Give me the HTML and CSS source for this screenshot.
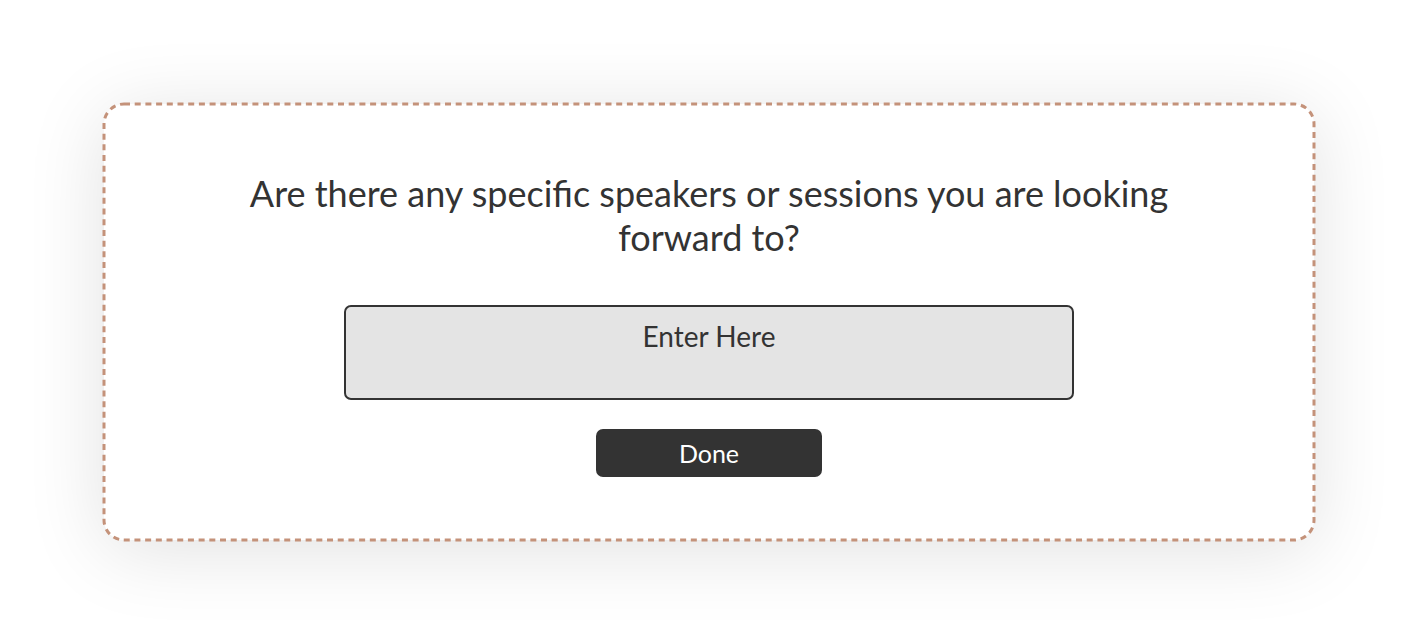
FILE: index.html
```html
<!DOCTYPE html>
<html lang="en">
<head>
<meta charset="utf-8">
<title>Question</title>
<link rel="stylesheet" href="styles.css">
</head>
<body>
<main class="card">
  <svg class="card-border" aria-hidden="true"><rect class="card-border-rect" x="0" y="0" rx="20" ry="20"></rect></svg>
  <h1 class="question">Are there any specific speakers or sessions you are looking forward to?</h1>
  <textarea class="answer" placeholder="Enter Here"></textarea>
  <button class="done" type="button">Done</button>
</main>
</body>
</html>
```
FILE: styles.css
```css
html, body {
  margin: 0;
  padding: 0;
  background: #ffffff;
}
body {
  box-sizing: border-box;
  min-height: 100vh;
  padding-top: 104px;
  font-family: Lato, "Liberation Sans", sans-serif;
  color: #333333;
}
.card {
  position: relative;
  box-sizing: border-box;
  width: 1210px;
  height: 436px;
  margin: 0 auto;
  border-radius: 20px;
  background: #ffffff;
  box-shadow: 0 10px 80px rgba(0, 0, 0, 0.12);
  display: flex;
  flex-direction: column;
  align-items: center;
  padding-top: 67px;
}
.card-border {
  position: absolute;
  left: 0;
  top: 0;
  width: 100%;
  height: 100%;
  overflow: visible;
  pointer-events: none;
}
.card-border-rect {
  width: 100%;
  height: 100%;
  fill: none;
  stroke: #c4927a;
  stroke-width: 3;
  stroke-dasharray: 6 4.7;
}
.question {
  margin: 0;
  max-width: 960px;
  font-size: 36px;
  font-weight: 400;
  line-height: 44px;
  text-align: center;
  color: #333333;
}
.answer {
  box-sizing: border-box;
  margin-top: 46px;
  width: 730px;
  height: 95px;
  border: 2px solid #333333;
  border-radius: 7px;
  background: #e4e4e4;
  resize: none;
  padding: 13px 12px 0;
  font-family: inherit;
  font-size: 28px;
  line-height: 32px;
  text-align: center;
  color: #333333;
  display: block;
}
.answer::placeholder {
  color: #333333;
  opacity: 1;
}
.done {
  margin-top: 29px;
  width: 226px;
  height: 48px;
  border: 0;
  border-radius: 7px;
  background: #333333;
  color: #ffffff;
  font-family: inherit;
  font-size: 25px;
  line-height: 48px;
  padding: 0;
}
```
